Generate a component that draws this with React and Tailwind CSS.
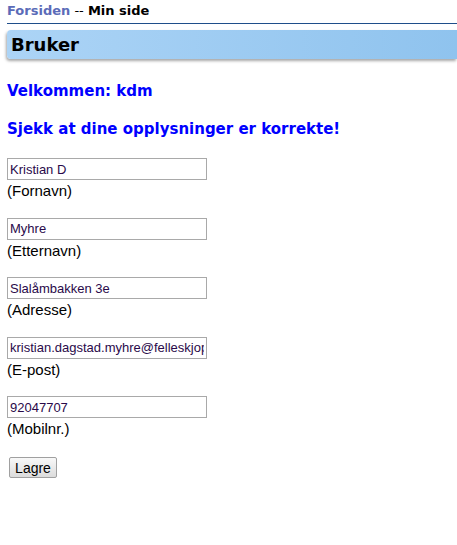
export default function App() {
    const fields = [
        { value: 'Kristian D', label: '(Fornavn)' },
        { value: 'Myhre', label: '(Etternavn)' },
        { value: 'Slalåmbakken 3e', label: '(Adresse)' },
        { value: 'kristian.dagstad.myhre@felleskjopet.no', label: '(E-post)' },
        { value: '92047707', label: '(Mobilnr.)' },
    ];

    return (
        <div className="min-h-[545px] bg-white pl-[7px] pt-[2px]">
            {/* breadcrumb */}
            <div className="font-['DejaVu_Sans',sans-serif] text-[13px] font-bold leading-[18px]">
                <a className="text-[#5b6bb8]">Forsiden</a>
                <span className="text-black font-normal"> -- </span>
                <span className="text-black">Min side</span>
            </div>
            <div className="mt-[3px] h-px bg-[#1f4e8a]"></div>

            <div className="mt-[6px] h-[29px] rounded-l-[4px] bg-gradient-to-r from-[#acd4f6] to-[#8fc3ee] shadow-[-1px_2px_3px_rgba(0,0,0,0.35)] flex items-center pl-[4px]">
                <h1 className="font-['DejaVu_Sans',sans-serif] text-[18px] font-bold text-black">Bruker</h1>
            </div>

            <h2 className="mt-[22px] font-['DejaVu_Sans',sans-serif] text-[15px] font-bold text-[#0000ff] leading-[20px]">Velkommen: kdm</h2>
            <h2 className="mt-[18px] font-['DejaVu_Sans',sans-serif] text-[15px] font-bold text-[#0000ff] leading-[20px]">Sjekk at dine opplysninger er korrekte!</h2>

            <form className="mt-[19px] flex flex-col gap-[18.5px] font-['Liberation_Sans',Arial,sans-serif]">
                {fields.map((f) => (
                    <div key={f.label} className="flex flex-col">
                        <input
                            type="text"
                            defaultValue={f.value}
                            className="w-[200px] h-[22px] border border-[#a9a9a9] px-[2px] text-[13px] text-[#2a0a4a] outline-none"
                        />
                        <span className="mt-[3px] text-[15px] leading-[16px] text-black">{f.label}</span>
                    </div>
                ))}
                <div>
                    <button
                        type="button"
                        className="ml-[2px] w-[48px] h-[21px] border border-[#a0a0a0] rounded-[2px] bg-gradient-to-b from-[#f8f8f8] to-[#dcdcdc] text-[14px] text-black"
                    >
                        Lagre
                    </button>
                </div>
            </form>
        </div>
    );
}
